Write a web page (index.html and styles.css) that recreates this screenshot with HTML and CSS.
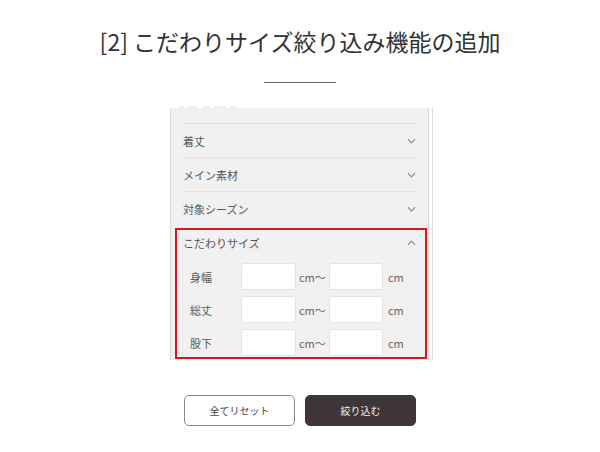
FILE: index.html
```html
<!DOCTYPE html>
<html lang="ja">
<head>
<meta charset="utf-8">
<link rel="stylesheet" href="styles.css">
</head>
<body>
<h1 class="title">[2] こだわりサイズ絞り込み機能の追加</h1>
<div class="rule"></div>

<div class="wrap">
  <div class="fragment">
    <i class="frag f1"></i><i class="frag f2"></i><i class="frag f3"></i><i class="frag f4"></i><i class="frag f5"></i>
  </div>
  <div class="panel">
    <div class="row"><span>着丈</span><svg class="chev" viewBox="0 0 10 6"><polyline points="1,1 5,5 9,1"/></svg></div>
    <div class="row"><span>メイン素材</span><svg class="chev" viewBox="0 0 10 6"><polyline points="1,1 5,5 9,1"/></svg></div>
    <div class="row"><span>対象シーズン</span><svg class="chev" viewBox="0 0 10 6"><polyline points="1,1 5,5 9,1"/></svg></div>

    <div class="box">
      <div class="box-head"><span>こだわりサイズ</span><svg class="chev" viewBox="0 0 10 6"><polyline points="1,5 5,1 9,5"/></svg></div>
      <div class="size-row">
        <span class="label">身幅</span>
        <div class="input"></div><span class="unit">cm〜</span>
        <div class="input i2"></div><span class="unit2">cm</span>
      </div>
      <div class="size-row">
        <span class="label">総丈</span>
        <div class="input"></div><span class="unit">cm〜</span>
        <div class="input i2"></div><span class="unit2">cm</span>
      </div>
      <div class="size-row">
        <span class="label">股下</span>
        <div class="input"></div><span class="unit">cm〜</span>
        <div class="input i2"></div><span class="unit2">cm</span>
      </div>
    </div>
  </div>
</div>

<div class="buttons">
  <button class="btn reset">全てリセット</button>
  <button class="btn submit">絞り込む</button>
</div>
</body>
</html>
```

FILE: styles.css
```css
html, body {
  margin: 0;
  padding: 0;
  background: #fff;
}
body {
  font-family: "Noto Sans CJK JP", "Noto Sans", sans-serif;
  color: #444;
  width: 600px;
}
.title {
  margin: 25px 0 0;
  text-align: center;
  font-size: 23px;
  line-height: 33px;
  font-weight: 400;
  color: #333;
}
.rule {
  width: 72px;
  height: 1px;
  background: #666;
  margin: 24px auto 0;
}
.wrap {
  margin: 20px 0 0 170px;
  width: 262px;
}
.fragment {
  height: 5px;
  display: flex;
  align-items: flex-end;
  gap: 4px;
  padding-left: 8px;
}
.frag {
  display: block;
  height: 2px;
  background: #f0f0f0;
}
.f1 { width: 6px; }
.f2 { width: 10px; }
.f3 { width: 8px; }
.f4 { width: 12px; }
.f5 { width: 7px; }
.panel {
  width: 257px;
  background: #f1f1f1;
  border-left: 1px solid #dadada;
  border-right: 1px solid #d6d6d6;
  box-shadow: 3px 0 0 #fff, 4px 0 0 #dedede;
  padding: 15px 0 1px;
}
.row {
  margin: 0 12px;
  height: 34px;
  border-top: 1px solid #e2e2e2;
  box-sizing: border-box;
  display: flex;
  align-items: center;
  justify-content: space-between;
  font-size: 11px;
  color: #555;
}
.chev {
  width: 9px;
  height: 6px;
  fill: none;
  stroke: #888;
  stroke-width: 1.3;
}
.box {
  margin: 3px 1px 0 4px;
  border: 2px solid #d3191f;
  padding: 0 0 1px;
}
.box-head {
  height: 26px;
  display: flex;
  align-items: center;
  justify-content: space-between;
  padding: 0 9px 0 6px;
  font-size: 11px;
  color: #555;
}
.size-row {
  display: flex;
  align-items: center;
  height: 27px;
  margin-top: 6px;
  font-size: 11px;
  color: #5a5a5a;
}
.box-head + .size-row {
  margin-top: 7px;
}
.label {
  width: 51px;
  margin-left: 13px;
}
.input {
  width: 55px;
  height: 27px;
  box-sizing: border-box;
  background: #fff;
  border: 1px solid #e3e3e3;
  border-radius: 3px;
}
.input.i2 {
  width: 54px;
}
.unit {
  width: 33px;
  padding-left: 3px;
  box-sizing: border-box;
  color: #666;
}
.unit2 {
  padding-left: 5px;
  color: #666;
}
.buttons {
  display: flex;
  justify-content: center;
  gap: 10px;
  margin-top: 35px;
}
.btn {
  width: 111px;
  height: 31px;
  border-radius: 5px;
  font-family: "Noto Sans CJK JP", "Noto Sans", sans-serif;
  font-size: 10px;
  padding: 0;
}
.reset {
  background: #fff;
  border: 1px solid #8a8a8a;
  color: #444;
}
.submit {
  background: #3e3636;
  border: 1px solid #3e3636;
  color: #f2f2f2;
}
```
